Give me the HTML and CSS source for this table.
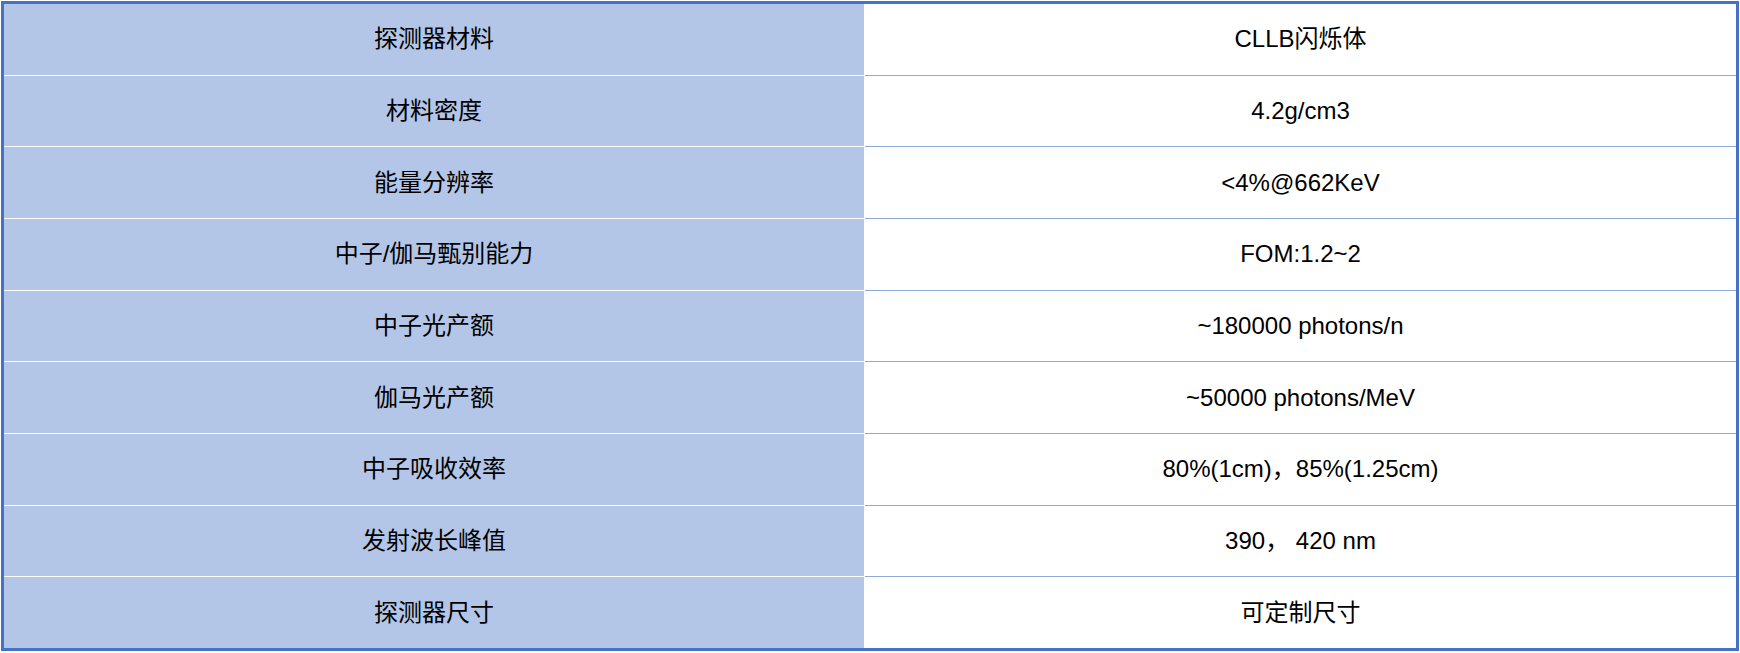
FILE: index.html
```html
<!DOCTYPE html>
<html lang="zh-CN">
<head>
<meta charset="utf-8">
<title>CLLB</title>
<link rel="stylesheet" href="styles.css">
</head>
<body>
<div class="spec">
  <div class="row"><div class="k">探测器材料</div><div class="v">CLLB闪烁体</div></div>
  <div class="row"><div class="k">材料密度</div><div class="v">4.2g/cm3</div></div>
  <div class="row"><div class="k">能量分辨率</div><div class="v">&lt;4%@662KeV</div></div>
  <div class="row"><div class="k">中子/伽马甄别能力</div><div class="v">FOM:1.2~2</div></div>
  <div class="row"><div class="k">中子光产额</div><div class="v">~180000 photons/n</div></div>
  <div class="row"><div class="k">伽马光产额</div><div class="v">~50000 photons/MeV</div></div>
  <div class="row"><div class="k">中子吸收效率</div><div class="v">80%(1cm)，85%(1.25cm)</div></div>
  <div class="row"><div class="k">发射波长峰值</div><div class="v">390， 420 nm</div></div>
  <div class="row"><div class="k">探测器尺寸</div><div class="v">可定制尺寸</div></div>
</div>
</body>
</html>
```

FILE: styles.css
```css
html, body {
  margin: 0;
  padding: 0;
  background: #fff;
}
body {
  padding: 1px;
  font-family: "Liberation Sans", "Noto Sans CJK SC", sans-serif;
  font-size: 24px;
  color: #000;
}
.spec {
  width: 1738px;
  height: 650px;
  box-sizing: border-box;
  border: 3px solid #4472c4;
  display: grid;
  grid-template-rows: repeat(9, 1fr);
  row-gap: 1px;
  background: linear-gradient(to right, #ffffff 861px, #8eaadb 861px);
}
.row {
  display: grid;
  grid-template-columns: 860px 1fr;
  column-gap: 1px;
  background: #fff;
}
.k, .v {
  display: flex;
  align-items: center;
  justify-content: center;
  line-height: 1;
}
.k {
  background: #b4c6e7;
}
.v {
  background: #fff;
}
```
